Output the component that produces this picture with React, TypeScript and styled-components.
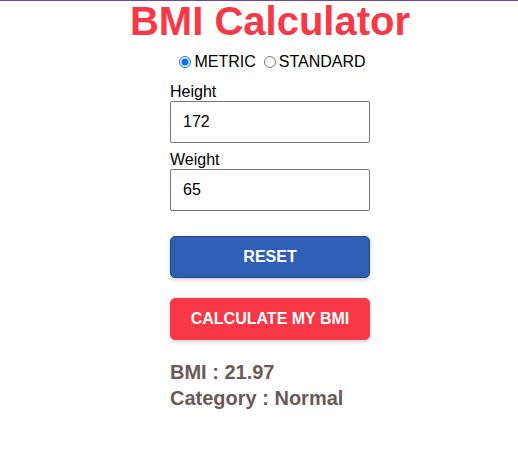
import React, { useState } from 'react';
import { styled, createGlobalStyle } from 'styled-components';

const GlobalStyle = createGlobalStyle`
  body {
    margin: 0;
    border-top: 1px solid #6a45b8;
    font-family: "Liberation Sans", Arial, sans-serif;
    background: #fff;
  }
`;

const Page = styled.div`
  display: flex;
  flex-direction: column;
  align-items: center;
  padding-left: 22px;
`;

const Title = styled.h1`
  margin: 0;
  font-size: 40px;
  line-height: 40px;
  font-weight: 700;
  color: #f83846;
`;

const Units = styled.div`
  display: flex;
  align-items: center;
  gap: 8px;
  margin-top: 12px;
  padding-left: 5px;
  font-size: 16px;
  color: #000;
  label {
    display: flex;
    align-items: center;
  }
  input {
    margin: 0 3px 0 0;
    width: 12px;
    height: 12px;
  }
`;

const Form = styled.div`
  width: 200px;
  display: flex;
  flex-direction: column;
  margin-top: 12px;
`;

const Field = styled.label`
  display: flex;
  flex-direction: column;
  font-size: 16px;
  line-height: 18px;
  color: #000;
  margin-bottom: 8px;
`;

const Input = styled.input`
  box-sizing: border-box;
  width: 200px;
  height: 42px;
  margin-top: 0;
  padding: 0 12px;
  border: 1px solid #767676;
  border-radius: 2px;
  font-family: inherit;
  font-size: 16px;
  color: #000;
`;

const Button = styled.button<{ $variant: 'reset' | 'calc' }>`
  box-sizing: border-box;
  width: 200px;
  height: 42px;
  border-radius: 5px;
  border: 1px solid ${(p) => (p.$variant === 'reset' ? '#1f4c78' : '#f83846')};
  background: ${(p) => (p.$variant === 'reset' ? '#2f5fb3' : '#f83846')};
  color: #fff;
  font-family: inherit;
  font-size: 16px;
  font-weight: 700;
  text-transform: uppercase;
  box-shadow: 0 2px 4px rgba(0, 0, 0, 0.18);
  margin-top: ${(p) => (p.$variant === 'reset' ? '17px' : '20px')};
  cursor: pointer;
`;

const Result = styled.div`
  margin-top: 19px;
  font-size: 20px;
  line-height: 26px;
  font-weight: 700;
  color: #6b5959;
`;

export default function App() {
  const [unit, setUnit] = useState('metric');
  const [height, setHeight] = useState('172');
  const [weight, setWeight] = useState('65');

  return (
    <>
      <GlobalStyle />
      <Page>
        <Title>BMI Calculator</Title>
        <Units>
          <label>
            <input type="radio" checked={unit === 'metric'} onChange={() => setUnit('metric')} />
            METRIC
          </label>
          <label>
            <input type="radio" checked={unit === 'standard'} onChange={() => setUnit('standard')} />
            STANDARD
          </label>
        </Units>
        <Form>
          <Field>
            Height
            <Input value={height} onChange={(e) => setHeight(e.target.value)} />
          </Field>
          <Field>
            Weight
            <Input value={weight} onChange={(e) => setWeight(e.target.value)} />
          </Field>
          <Button $variant="reset">Reset</Button>
          <Button $variant="calc">Calculate my BMI</Button>
          <Result>
            <div>BMI : 21.97</div>
            <div>Category : Normal</div>
          </Result>
        </Form>
      </Page>
    </>
  );
}
